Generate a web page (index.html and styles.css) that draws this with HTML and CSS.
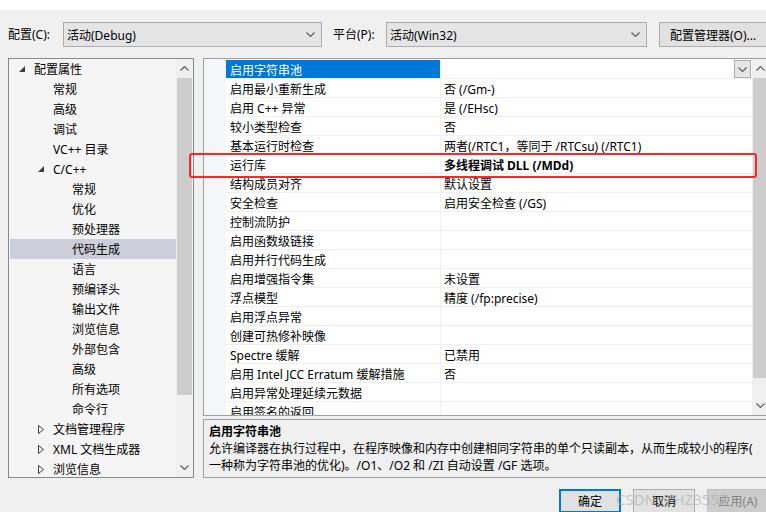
FILE: index.html
```html
<!DOCTYPE html>
<html lang="zh-CN">
<head>
    <meta charset="UTF-8">
    <title>属性页</title>
    <link rel="stylesheet" href="styles.css">
</head>
<body>
<div class="page">
    <div class="top-strip"></div>

    <div class="toolbar">
        <span class="tool-label">配置(C):</span>
        <div class="combo combo-config">
            <span>活动(Debug)</span>
            <svg class="chevron" width="9" height="5" viewBox="0 0 9 5"><polyline points="0.5,0.5 4.5,4.5 8.5,0.5"/></svg>
        </div>
        <span class="tool-label tool-label-platform">平台(P):</span>
        <div class="combo combo-platform">
            <span>活动(Win32)</span>
            <svg class="chevron" width="9" height="5" viewBox="0 0 9 5"><polyline points="0.5,0.5 4.5,4.5 8.5,0.5"/></svg>
        </div>
        <button class="btn btn-manager">配置管理器(O)...</button>
    </div>

    <div class="main">
        <!-- left tree -->
        <div class="tree-panel">
            <div class="tree-list">
                <div class="tree-row lv0"><span class="toggle"><svg width="6" height="6" viewBox="0 0 6 6"><polygon points="6,0 6,6 0,6"/></svg></span>配置属性</div>
                <div class="tree-row lv1"><span class="toggle"></span>常规</div>
                <div class="tree-row lv1"><span class="toggle"></span>高级</div>
                <div class="tree-row lv1"><span class="toggle"></span>调试</div>
                <div class="tree-row lv1"><span class="toggle"></span>VC++ 目录</div>
                <div class="tree-row lv1"><span class="toggle"><svg width="6" height="6" viewBox="0 0 6 6"><polygon points="6,0 6,6 0,6"/></svg></span>C/C++</div>
                <div class="tree-row lv2"><span class="toggle"></span>常规</div>
                <div class="tree-row lv2"><span class="toggle"></span>优化</div>
                <div class="tree-row lv2"><span class="toggle"></span>预处理器</div>
                <div class="tree-row lv2 selected"><span class="toggle"></span>代码生成</div>
                <div class="tree-row lv2"><span class="toggle"></span>语言</div>
                <div class="tree-row lv2"><span class="toggle"></span>预编译头</div>
                <div class="tree-row lv2"><span class="toggle"></span>输出文件</div>
                <div class="tree-row lv2"><span class="toggle"></span>浏览信息</div>
                <div class="tree-row lv2"><span class="toggle"></span>外部包含</div>
                <div class="tree-row lv2"><span class="toggle"></span>高级</div>
                <div class="tree-row lv2"><span class="toggle"></span>所有选项</div>
                <div class="tree-row lv2"><span class="toggle"></span>命令行</div>
                <div class="tree-row lv1"><span class="toggle"><svg class="closed" width="6" height="9" viewBox="0 0 6 9"><polygon points="0.5,0.5 5.5,4.5 0.5,8.5"/></svg></span>文档管理程序</div>
                <div class="tree-row lv1"><span class="toggle"><svg class="closed" width="6" height="9" viewBox="0 0 6 9"><polygon points="0.5,0.5 5.5,4.5 0.5,8.5"/></svg></span>XML 文档生成器</div>
                <div class="tree-row lv1"><span class="toggle"><svg class="closed" width="6" height="9" viewBox="0 0 6 9"><polygon points="0.5,0.5 5.5,4.5 0.5,8.5"/></svg></span>浏览信息</div>
            </div>
            <div class="scrollbar tree-scroll">
                <div class="arrow"><svg width="9" height="5" viewBox="0 0 9 5"><polyline points="0.5,4.5 4.5,0.5 8.5,4.5"/></svg></div>
                <div class="thumb"></div>
                <div class="track"></div>
                <div class="arrow"><svg width="9" height="5" viewBox="0 0 9 5"><polyline points="0.5,0.5 4.5,4.5 8.5,0.5"/></svg></div>
            </div>
        </div>

        <div class="right-col">
            <!-- property grid -->
            <div class="grid-panel">
                <div class="gutter"></div>
                <div class="grid">
                    <div class="grid-row active">
                        <div class="name">启用字符串池</div>
                        <div class="value">
                            <span class="cell-drop"><svg width="9" height="5" viewBox="0 0 9 5"><polyline points="0.5,0.5 4.5,4.5 8.5,0.5"/></svg></span>
                        </div>
                    </div>
                    <div class="grid-row"><div class="name">启用最小重新生成</div><div class="value">否 (/Gm-)</div></div>
                    <div class="grid-row"><div class="name">启用 C++ 异常</div><div class="value">是 (/EHsc)</div></div>
                    <div class="grid-row"><div class="name">较小类型检查</div><div class="value">否</div></div>
                    <div class="grid-row"><div class="name">基本运行时检查</div><div class="value">两者(/RTC1，等同于 /RTCsu) (/RTC1)</div></div>
                    <div class="grid-row"><div class="name">运行库</div><div class="value bold">多线程调试 DLL (/MDd)</div></div>
                    <div class="grid-row"><div class="name">结构成员对齐</div><div class="value">默认设置</div></div>
                    <div class="grid-row"><div class="name">安全检查</div><div class="value">启用安全检查 (/GS)</div></div>
                    <div class="grid-row"><div class="name">控制流防护</div><div class="value"></div></div>
                    <div class="grid-row"><div class="name">启用函数级链接</div><div class="value"></div></div>
                    <div class="grid-row"><div class="name">启用并行代码生成</div><div class="value"></div></div>
                    <div class="grid-row"><div class="name">启用增强指令集</div><div class="value">未设置</div></div>
                    <div class="grid-row"><div class="name">浮点模型</div><div class="value">精度 (/fp:precise)</div></div>
                    <div class="grid-row"><div class="name">启用浮点异常</div><div class="value"></div></div>
                    <div class="grid-row"><div class="name">创建可热修补映像</div><div class="value"></div></div>
                    <div class="grid-row"><div class="name">Spectre 缓解</div><div class="value">已禁用</div></div>
                    <div class="grid-row"><div class="name">启用 Intel JCC Erratum 缓解措施</div><div class="value">否</div></div>
                    <div class="grid-row"><div class="name">启用异常处理延续元数据</div><div class="value"></div></div>
                    <div class="grid-row"><div class="name">启用签名的返回</div><div class="value"></div></div>
                </div>
                <div class="scrollbar grid-scroll">
                    <div class="arrow"><svg width="9" height="5" viewBox="0 0 9 5"><polyline points="0.5,4.5 4.5,0.5 8.5,4.5"/></svg></div>
                    <div class="thumb"></div>
                    <div class="track"></div>
                    <div class="arrow"><svg width="9" height="5" viewBox="0 0 9 5"><polyline points="0.5,0.5 4.5,4.5 8.5,0.5"/></svg></div>
                </div>
            </div>

            <!-- description -->
            <div class="desc-panel">
                <div class="desc-title">启用字符串池</div>
                <div class="desc-text">允许编译器在执行过程中，在程序映像和内存中创建相同字符串的单个只读副本，从而生成较小的程序(<br>一种称为字符串池的优化)。/O1、/O2 和 /ZI 自动设置 /GF 选项。</div>
            </div>
        </div>
    </div>

    <div class="footer">
        <button class="btn btn-ok">确定</button>
        <button class="btn">取消</button>
        <button class="btn btn-disabled">应用(A)</button>
    </div>

    <div class="highlight-box"></div>
    <div class="watermark">CSDN @HZ3557</div>
</div>
</body>
</html>
```

FILE: styles.css
```css
* {
    margin: 0;
    padding: 0;
    box-sizing: border-box;
}

body {
    background: #f0f0f0;
    font-family: "Noto Sans", "Noto Sans CJK SC", sans-serif;
    font-size: 12px;
    color: #000;
    overflow: hidden;
    width: 766px;
    height: 512px;
}

.page {
    position: relative;
    width: 780px;
    height: 512px;
}

.top-strip {
    height: 10px;
    background: #ffffff;
}

/* toolbar */

.toolbar {
    display: flex;
    align-items: center;
    height: 25px;
    margin-top: 12px;
    padding-left: 8px;
}

.tool-label {
    width: 55px;
    line-height: 25px;
}

.tool-label-platform {
    width: 53px;
    margin-left: 11px;
}

.combo {
    height: 25px;
    background: #e5e5e5;
    border: 1px solid #adadad;
    display: flex;
    align-items: center;
    justify-content: space-between;
    padding: 0 6px 0 3px;
}

.combo-config {
    width: 259px;
}

.combo-platform {
    width: 261px;
}

.chevron polyline,
.cell-drop polyline,
.arrow polyline {
    fill: none;
    stroke: #606060;
    stroke-width: 1.2;
}

.btn {
    font-family: inherit;
    font-size: 12px;
    color: #000;
    height: 25px;
    background: #e1e1e1;
    border: 1px solid #adadad;
}

.btn-manager {
    width: 115px;
    margin-left: 12px;
    text-align: left;
    padding-left: 10px;
}

/* main panels */

.main {
    display: flex;
    margin-top: 11px;
    height: 420px;
    padding-left: 8px;
}

.tree-panel {
    width: 186px;
    height: 420px;
    border: 1px solid #868a91;
    background: #f5f5f5;
    display: flex;
    overflow: hidden;
}

.tree-list {
    width: 167px;
    overflow: hidden;
}

.tree-row {
    height: 20px;
    display: flex;
    align-items: center;
    white-space: nowrap;
}

.tree-row.lv0 { padding-left: 10px; }
.tree-row.lv1 { padding-left: 29px; }
.tree-row.lv2 { padding-left: 48px; }

.tree-row.selected {
    background: #cccedb;
    margin-left: 1px;
    padding-left: 47px;
}

.toggle {
    width: 15px;
    display: flex;
    align-items: center;
}

.toggle polygon {
    fill: #3c3c3c;
}

.toggle .closed polygon {
    fill: none;
    stroke: #3c3c3c;
    stroke-width: 1;
}

.scrollbar {
    width: 17px;
    background: #f0f0f0;
    display: flex;
    flex-direction: column;
    align-items: center;
}

.tree-scroll {
    height: 418px;
}

.scrollbar .arrow {
    height: 19px;
    width: 100%;
    display: flex;
    align-items: center;
    justify-content: center;
}

.scrollbar .thumb {
    width: 15px;
    background: #cdcdcd;
}

.scrollbar .track {
    flex: 1;
}

.tree-scroll .thumb {
    height: 317px;
}

/* right column */

.right-col {
    margin-left: 9px;
    width: 567px;
    display: flex;
    flex-direction: column;
}

.grid-panel {
    height: 358px;
    border: 1px solid #a0a0a0;
    display: flex;
    overflow: hidden;
    background: #ffffff;
}

.gutter {
    width: 22px;
    background: #f4f6fa;
}

.grid {
    width: 527px;
    overflow: hidden;
    padding-top: 1px;
}

.grid-row {
    height: 19px;
    display: flex;
    border-bottom: 1px solid #f0f0f4;
    white-space: nowrap;
}

.grid-row .name {
    width: 215px;
    padding: 1px 0 0 4px;
    border-right: 1px solid #f0f0f4;
    display: flex;
    align-items: center;
}

.grid-row .value {
    flex: 1;
    padding: 1px 0 0 3px;
    display: flex;
    align-items: center;
    justify-content: space-between;
}

.grid-row .value.bold {
    font-weight: bold;
}

.grid-row.active .name {
    background: #0078d7;
    color: #ffffff;
}

.cell-drop {
    width: 17px;
    height: 18px;
    margin: -1px 1px 0 auto;
    background: #e5e5e5;
    border: 1px solid #adadad;
    display: flex;
    align-items: center;
    justify-content: center;
}

.grid-scroll {
    height: 356px;
}

.grid-scroll .thumb {
    height: 300px;
}

.desc-panel {
    margin-top: 3px;
    height: 59px;
    border: 1px solid #a0a0a0;
    background: #f0f0f0;
    padding: 3px 0 0 5px;
    line-height: 17px;
}

.desc-title {
    font-weight: bold;
}

.desc-text {
    white-space: nowrap;
}

/* footer */

.footer {
    display: flex;
    justify-content: flex-end;
    gap: 12px;
    margin-top: 11px;
    padding-right: 11px;
}

.footer .btn {
    width: 62px;
    height: 24px;
}

.btn-ok {
    border: 2px solid #0078d7;
}

.btn-disabled {
    background: #cccccc;
    border-color: #bfbfbf;
    color: #838383;
}

/* overlays */

.highlight-box {
    position: absolute;
    left: 189px;
    top: 153px;
    width: 568px;
    height: 25px;
    border: 2.5px solid #f22a2a;
    border-radius: 3px;
}

.watermark {
    position: absolute;
    left: 616px;
    top: 489px;
    font-size: 15px;
    color: rgba(170, 170, 170, 0.6);
    white-space: nowrap;
}
```
